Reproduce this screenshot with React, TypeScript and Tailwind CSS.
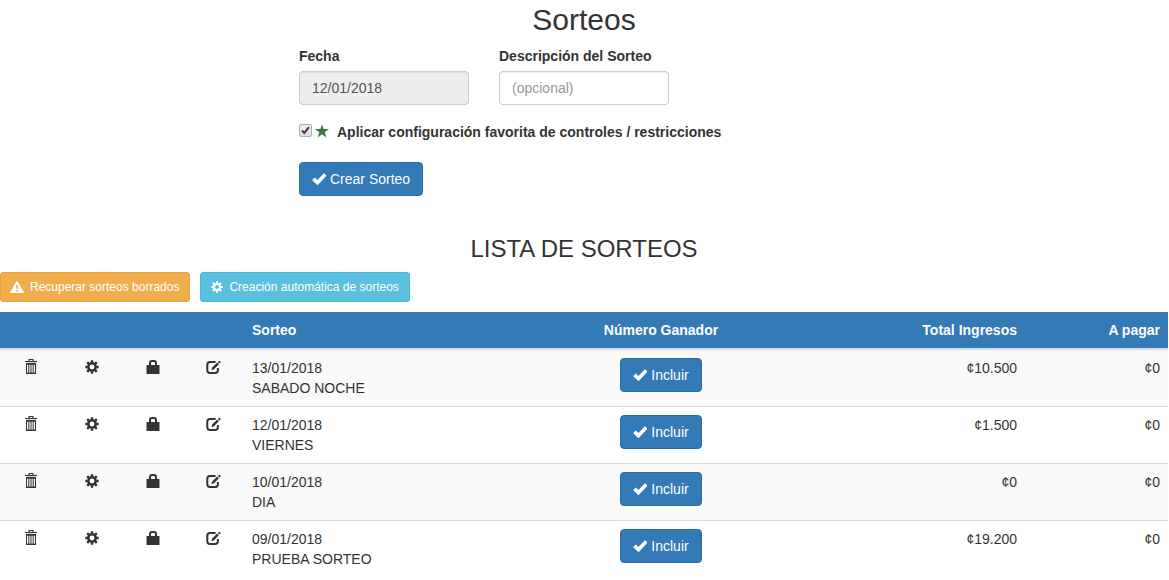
import type { ReactNode } from "react";

interface Sorteo {
  fecha: string;
  nombre: string;
  ingresos: string;
  pagar: string;
}

const sorteos: Sorteo[] = [
  { fecha: "13/01/2018", nombre: "SABADO NOCHE", ingresos: "¢10.500", pagar: "¢0" },
  { fecha: "12/01/2018", nombre: "VIERNES", ingresos: "¢1.500", pagar: "¢0" },
  { fecha: "10/01/2018", nombre: "DIA", ingresos: "¢0", pagar: "¢0" },
  { fecha: "09/01/2018", nombre: "PRUEBA SORTEO", ingresos: "¢19.200", pagar: "¢0" },
];

function CheckIcon() {
  return (
    <svg viewBox="0 0 14 14" className="size-[14px] shrink-0" fill="currentColor" aria-hidden="true">
      <path d="M.5 7.7 2.4 5.8Q2.8 5.5 3.2 5.8L5.5 8 11.6 1.5Q12 1.1 12.4 1.5L14.2 3.2Q14.5 3.6 14.2 4L6 12.7Q5.5 13.1 5 12.7L.5 8.5Q.2 8.1.5 7.7Z" />
    </svg>
  );
}

function StarIcon() {
  return (
    <svg viewBox="0 0 14 14" className="size-[14px] shrink-0" fill="#3c763d" aria-hidden="true">
      <path d="M7 .2 8.6 5H14L9.7 8.2 11.4 13.4 7 10.3 2.6 13.4 4.3 8.2 0 5H5.4Z" />
    </svg>
  );
}

function WarningIcon() {
  return (
    <svg viewBox="0 0 14 12" className="h-3 w-[14px] shrink-0" aria-hidden="true">
      <path d="M6.4.4Q7 -.3 7.6.4L13.9 11.2Q14.1 12 13.3 12H.7Q-.1 12 .1 11.2Z" fill="currentColor" />
      <path d="M6 4H8L7.6 8H6.4ZM6.2 9H7.8V10.5H6.2Z" fill="#f0ad4e" />
    </svg>
  );
}

function CogIcon({ className }: { className: string }) {
  return (
    <svg viewBox="0 0 14 14" className={className} fill="none" stroke="currentColor" aria-hidden="true">
      <circle cx="7" cy="7" r="3.7" strokeWidth="2.5" />
      <path
        d="M7 .3V2.6M7 11.4V13.7M.3 7H2.6M11.4 7H13.7M2.2 2.2 3.9 3.9M10.1 10.1 11.8 11.8M2.2 11.8 3.9 10.1M10.1 3.9 11.8 2.2"
        strokeWidth="2.4"
      />
    </svg>
  );
}

function TrashIcon() {
  return (
    <svg viewBox="0 0 12 15" className="h-[15px] w-3" fill="none" stroke="currentColor" aria-hidden="true">
      <path d="M4 2V.5H8V2" strokeWidth="1.1" />
      <path d="M0 2.5H12" strokeWidth="1.1" />
      <path d="M1 4.8H11" strokeWidth="1.8" />
      <path d="M1.5 4V14.4M10.5 4V14.4M3.8 5V14M6 5V14M8.2 5V14" strokeWidth="1" />
      <path d="M1 14.3H11" strokeWidth="1.4" />
    </svg>
  );
}

function LockIcon() {
  return (
    <svg viewBox="0 0 14 14" className="size-[14px]" aria-hidden="true">
      <path d="M4 6V3.2Q4 1 6 1H8Q10 1 10 3.2V6" fill="none" stroke="currentColor" strokeWidth="2" />
      <path d="M1 5H13Q13.5 5 13.5 5.5V13.5Q13.5 14 13 14H1Q.5 14 .5 13.5V5.5Q.5 5 1 5Z" fill="currentColor" />
    </svg>
  );
}

function EditIcon() {
  return (
    <svg viewBox="0 0 15 14" className="h-[14px] w-[15px]" aria-hidden="true">
      <path
        d="M9.6 2H4Q1.3 2 1.3 4.7V10.3Q1.3 13 4 13H9.2Q11.9 13 11.9 10.3V8"
        fill="none"
        stroke="currentColor"
        strokeWidth="2"
      />
      <path d="M5.4 10.2 6.2 7.6 11.2 2.6 12.9 4.3 8 9.3ZM11.9 1.9 12.9 1Q13.3.6 13.7 1L14.5 1.8Q14.9 2.2 14.5 2.6L13.6 3.6Z" fill="currentColor" />
    </svg>
  );
}

function PrimaryButton({ children }: { children: ReactNode }) {
  return (
    <button
      type="button"
      className="inline-flex items-center gap-1 rounded border border-[#2e6da4] bg-[#337ab7] px-3 py-1.5 leading-5 text-white"
    >
      <CheckIcon />
      {children}
    </button>
  );
}

function IconCell({ label, children }: { label: string; children: ReactNode }) {
  return (
    <td className="p-2 align-top">
      <button type="button" aria-label={label} className="mx-auto flex h-4 items-end">
        {children}
      </button>
    </td>
  );
}

export default function App() {
  return (
    <main className="bg-white pr-px font-['Liberation_Sans',Arial,sans-serif] text-[14px] leading-5 text-[#333]">
      <h1 className="pt-1 text-center text-[30px] leading-8">Sorteos</h1>

      <form className="mx-auto max-w-[600px] px-[15px] pt-2.5">
        <div className="grid grid-cols-3 gap-[30px]">
          <div>
            <label htmlFor="fecha" className="mb-[5px] block font-bold">
              Fecha
            </label>
            <input
              id="fecha"
              type="text"
              readOnly
              value="12/01/2018"
              className="block h-[34px] w-full rounded border border-[#ccc] bg-[#eee] px-3 text-[#555] shadow-[inset_0_1px_1px_rgba(0,0,0,0.075)]"
            />
          </div>
          <div>
            <label htmlFor="descripcion" className="mb-[5px] block font-bold whitespace-nowrap">
              Descripción del Sorteo
            </label>
            <input
              id="descripcion"
              type="text"
              placeholder="(opcional)"
              className="block h-[34px] w-full rounded border border-[#ccc] bg-white px-3 text-[#555] shadow-[inset_0_1px_1px_rgba(0,0,0,0.075)] placeholder:text-[#999]"
            />
          </div>
        </div>

        <div className="mt-4 flex items-start">
          <span className="mt-[3px] grid">
            <input
              id="favorita"
              type="checkbox"
              defaultChecked
              className="peer col-start-1 row-start-1 size-[13px] appearance-none rounded-xs border border-[#b0b0b0] bg-linear-to-b from-[#eee] to-[#dcdcdc]"
            />
            <svg
              viewBox="0 0 13 13"
              className="pointer-events-none invisible col-start-1 row-start-1 size-[13px] peer-checked:visible"
              aria-hidden="true"
            >
              <path d="M3 6.6 5.3 9 10 3.2" fill="none" stroke="#404040" strokeWidth="2.1" />
            </svg>
          </span>
          <label htmlFor="favorita" className="flex items-start gap-2 pl-[3px] font-bold">
            <span className="pt-[3px]">
              <StarIcon />
            </span>
            <span className="pt-px">Aplicar configuración favorita de controles / restricciones</span>
          </label>
        </div>

        <div className="mt-5">
          <PrimaryButton>Crear Sorteo</PrimaryButton>
        </div>
      </form>

      <h2 className="mt-10 text-center text-[24px] leading-[26px]">LISTA DE SORTEOS</h2>

      <div className="mt-2.5 flex gap-2.5 text-[12px] leading-[18px] text-white">
        <button
          type="button"
          className="flex items-center gap-1.5 rounded-[3px] border border-[#eea236] bg-[#f0ad4e] py-[5px] pr-2.5 pl-[9px]"
        >
          <WarningIcon />
          Recuperar sorteos borrados
        </button>
        <button
          type="button"
          className="flex items-center gap-1.5 rounded-[3px] border border-[#46b8da] bg-[#5bc0de] px-2.5 py-[5px]"
        >
          <CogIcon className="size-3 shrink-0" />
          Creación automática de sorteos
        </button>
      </div>

      <table className="mt-2.5 w-full table-fixed border-collapse">
        <thead>
          <tr className="border-b-2 border-[#ddd] bg-[#337ab7] text-white">
            <td className="w-[61px]" />
            <td className="w-[61px]" />
            <td className="w-[61px]" />
            <td className="w-[61px]" />
            <th className="p-2 text-left">Sorteo</th>
            <th className="w-[206px] p-2 text-center">Número Ganador</th>
            <th className="w-[261px] p-2 text-right">Total Ingresos</th>
            <th className="w-[143px] p-2 text-right">A pagar</th>
          </tr>
        </thead>
        <tbody>
          {sorteos.map((sorteo) => (
            <tr key={sorteo.fecha} className="border-t border-[#ddd] odd:bg-[#f9f9f9]">
              <IconCell label="Borrar">
                <TrashIcon />
              </IconCell>
              <IconCell label="Configurar">
                <CogIcon className="size-[14px]" />
              </IconCell>
              <IconCell label="Bloquear">
                <LockIcon />
              </IconCell>
              <IconCell label="Editar">
                <EditIcon />
              </IconCell>
              <td className="p-2 align-top">
                {sorteo.fecha}
                <br />
                {sorteo.nombre}
              </td>
              <td className="p-2 text-center align-top">
                <PrimaryButton>Incluir</PrimaryButton>
              </td>
              <td className="p-2 text-right align-top">{sorteo.ingresos}</td>
              <td className="p-2 text-right align-top">{sorteo.pagar}</td>
            </tr>
          ))}
        </tbody>
      </table>
    </main>
  );
}
